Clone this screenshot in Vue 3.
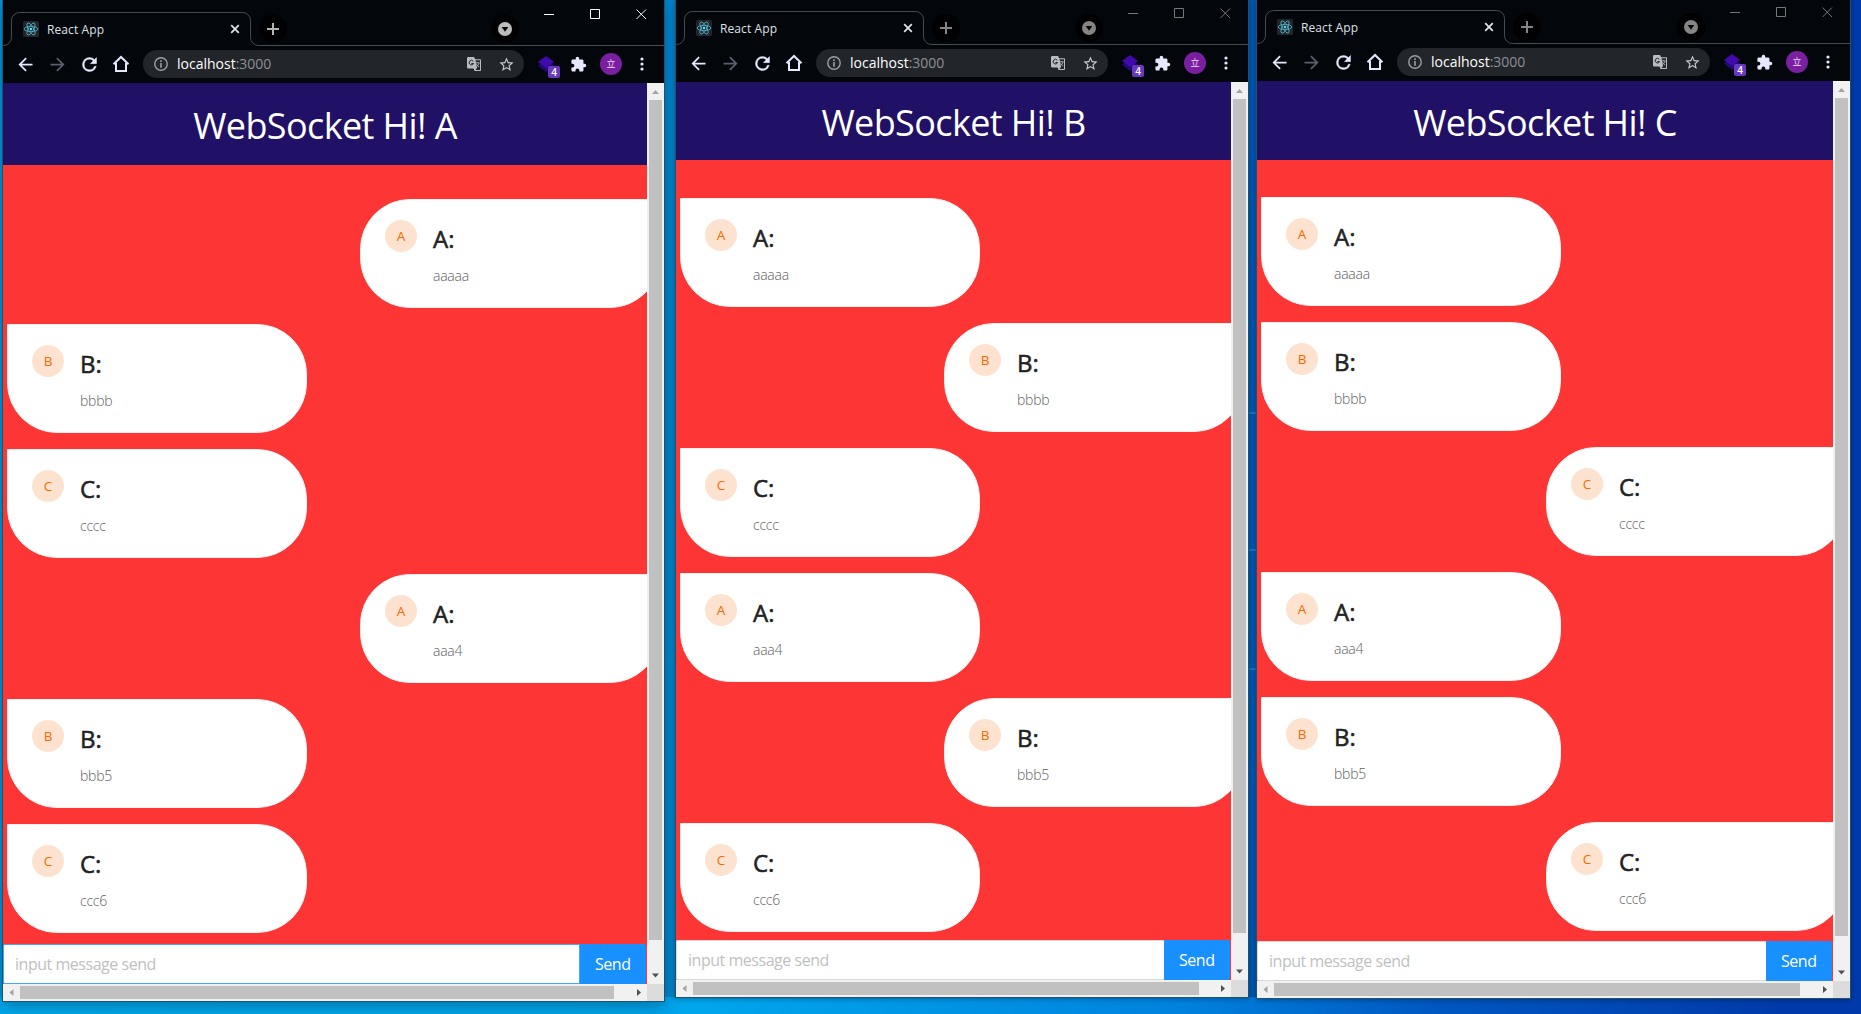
<script setup>
const thread = [
  { from: 'A', text: 'aaaaa' },
  { from: 'B', text: 'bbbb' },
  { from: 'C', text: 'cccc' },
  { from: 'A', text: 'aaa4' },
  { from: 'B', text: 'bbb5' },
  { from: 'C', text: 'ccc6' },
]

const windows = [
  { user: 'A', active: true, left: 2, top: 0, width: 663, height: 1002, header: 82, gap: 34, vThumb: 840, hThumb: 594 },
  { user: 'B', active: false, left: 675, top: -1, width: 574, height: 999, header: 78, gap: 38, vThumb: 834, hThumb: 506 },
  { user: 'C', active: false, left: 1256, top: -2, width: 595, height: 1001, header: 79, gap: 37, vThumb: 838, hThumb: 526 },
]

const px = (n) => `${n}px`
</script>

<template>
  <main class="desktop">
    <i class="beam b1"></i><i class="beam b2"></i><i class="beam b3"></i>
    <section
      v-for="w in windows"
      :key="w.user"
      class="window"
      :class="{ active: w.active }"
      :style="{ left: px(w.left), top: px(w.top), width: px(w.width), height: px(w.height) }"
    >
      <div class="titlebar">
        <div class="tab">
          <svg class="tab-shape" width="258" height="46" viewBox="0 0 258 46">
            <path d="M0 45.5h.5a8 8 0 0 0 8-8v-17a8 8 0 0 1 8-8h223a8 8 0 0 1 8 8v17a8 8 0 0 0 8 8h3" />
          </svg>
          <svg class="favicon" width="16" height="16" viewBox="0 0 16 16">
            <rect width="16" height="16" rx="1.5" fill="#22252a" />
            <g fill="none" stroke="#4fb4ca" stroke-width=".85">
              <ellipse cx="8" cy="8" rx="6.8" ry="2.6" />
              <ellipse cx="8" cy="8" rx="6.8" ry="2.6" transform="rotate(60 8 8)" />
              <ellipse cx="8" cy="8" rx="6.8" ry="2.6" transform="rotate(120 8 8)" />
            </g>
            <circle cx="8" cy="8" r="1.3" fill="#61dafb" />
          </svg>
          <span class="tab-title">React App</span>
          <svg class="tab-close" width="10" height="10" viewBox="0 0 10 10"><path d="M1.2 1.2l7.6 7.6M8.8 1.2L1.2 8.8" /></svg>
        </div>
        <div class="strip">
          <span class="round plus"><svg width="12" height="12" viewBox="0 0 12 12"><path d="M6 0v12M0 6h12" /></svg></span>
          <span class="spacer"></span>
          <span class="round search">
            <svg width="14" height="14" viewBox="0 0 14 14"><circle cx="7" cy="7" r="7" /><path d="M3.7 5h6.6L7 9.7z" fill="#020306" /></svg>
          </span>
          <svg class="controls" width="138" height="30" viewBox="0 0 138 30">
            <path d="M18 14.5h10M64.500 9.500h9v9h-9zM110.500 9.500l9.500 9.500M120 9.500l-9.500 9.500" />
          </svg>
        </div>
      </div>

      <div class="toolbar">
        <svg class="nav" viewBox="0 0 24 24"><path d="M20 11H7.830l5.590-5.590L12 4l-8 8 8 8 1.410-1.410L7.830 13H20z" /></svg>
        <svg class="nav dim" viewBox="0 0 24 24"><path d="M12 4l-1.410 1.410L16.170 11H4v2h12.170l-5.580 5.590L12 20l8-8z" /></svg>
        <svg class="nav" viewBox="0 0 24 24"><path stroke="#e6e8fb" stroke-width=".5" d="M17.650 6.350A7.960 7.960 0 0 0 12 4a8 8 0 1 0 7.730 10h-2.080A6 6 0 1 1 12 6c1.660 0 3.140.69 4.220 1.780L13 11h7V4z" /></svg>
        <svg class="nav home" viewBox="0 0 18 18"><path d="M1.500 9.300L9 2l7.500 7.300M4 8v8h10V8" /></svg>
        <div class="address">
          <svg width="14" height="14" viewBox="0 0 14 14"><circle cx="7" cy="7" r="6.200" fill="none" stroke="#9aa0a6" stroke-width="1.400" /><path d="M6.200 3.300h1.600v1.600H6.200zM6.200 6h1.600v4.700H6.200z" fill="#9aa0a6" /></svg>
          <span class="url">localhost<em>:3000</em></span>
          <svg class="translate" width="14" height="14" viewBox="0 0 14 14">
            <path d="M1.200 0H7l1.200 2.200h4.900a.9.900 0 0 1 .9.900v10a.9.900 0 0 1-.9.900H7.500L6.600 11.500H1.200A1.200 1.200 0 0 1 0 10.300V1.200A1.200 1.200 0 0 1 1.200 0z" fill="#b9bcc0" />
            <path d="M8.600 3.200h4.400V13H8.400l1.600-2z" fill="#24272b" />
            <path d="M6.300 4.300a2.300 2.300 0 1 0 .3 2.200H4.400" fill="none" stroke="#24272b" />
            <path d="M8.800 5.800h3.900M10.800 5v.8M12 6c-.3 1.700-1.400 3-2.600 3.800M9.500 7.200c.5 1.300 1.400 2.200 2.600 2.900" fill="none" stroke="#b9bcc0" stroke-width=".8" />
          </svg>
          <svg class="star" width="17" height="17" viewBox="0 0 24 24"><path d="M22 9.240l-7.190-.62L12 2 9.190 8.630 2 9.240l5.460 4.730L5.820 21 12 17.270 18.180 21l-1.630-7.030zM12 15.400l-3.760 2.270 1-4.280-3.320-2.880 4.380-.38L12 6.100l1.710 4.040 4.380.38-3.320 2.880 1 4.280z" /></svg>
        </div>
        <span class="ext">
          <svg width="16" height="16" viewBox="0 0 16 16"><path d="M0 9.500l8-5.500 8 5.500-8 6.500z" fill="#200a78" /><path d="M0 6l8-6 8 6-8 6z" fill="#4209ac" /></svg>
          <b>4</b>
        </span>
        <svg class="puzzle" width="17" height="17" viewBox="0 0 24 24"><path d="M20.500 11H19V7c0-1.100-.9-2-2-2h-4V3.500a2.500 2.500 0 0 0-5 0V5H4c-1.100 0-1.990.9-1.990 2v3.800H3.500a2.700 2.700 0 0 1 0 5.400H2V20c0 1.100.9 2 2 2h3.800v-1.500a2.700 2.700 0 0 1 5.400 0V22H17c1.100 0 2-.9 2-2v-4h1.500a2.500 2.500 0 0 0 0-5z" /></svg>
        <span class="profile">立</span>
        <svg class="dots" width="4" height="14" viewBox="0 0 4 14"><circle cx="2" cy="2" r="1.600" /><circle cx="2" cy="7" r="1.600" /><circle cx="2" cy="12" r="1.600" /></svg>
      </div>

      <div class="viewport">
        <div class="page">
          <h1 :style="{ height: px(w.header) }">WebSocket Hi! {{ w.user }}</h1>
          <div class="messages" :style="{ paddingTop: px(w.gap) }">
            <article v-for="m in thread" :key="m.text" class="card" :class="{ own: m.from === w.user }">
              <span class="avatar">{{ m.from }}</span>
              <div class="body">
                <h4>{{ m.from }}:</h4>
                <p>{{ m.text }}</p>
              </div>
            </article>
          </div>
          <div class="composer">
            <div class="input">input message send</div>
            <div class="send">Send</div>
          </div>
        </div>
        <div class="vbar">
          <svg width="17" height="17"><path d="M5 11l3.500-4 3.500 4z" fill="#a3a3a3" /></svg>
          <i :style="{ height: px(w.vThumb) }"></i>
          <svg class="end" width="17" height="17"><path d="M5 6.500h7L8.500 10.500z" fill="#505050" /></svg>
        </div>
      </div>
      <div class="hbar">
        <svg width="17" height="17"><path d="M10.500 5v7l-4-3.500z" fill="#a3a3a3" /></svg>
        <i :style="{ width: px(w.hThumb) }"></i>
        <svg class="end" width="17" height="17"><path d="M7 5v7l4-3.500z" fill="#505050" /></svg>
        <span class="corner"></span>
      </div>
    </section>
  </main>
</template>

<style>
body {
  margin: 0;
  overflow: hidden;
}
</style>

<style scoped>
* {
  box-sizing: border-box;
}
svg {
  display: block;
  flex: none;
}
.desktop {
  position: relative;
  width: 1861px;
  height: 1014px;
  overflow: hidden;
  font-family: 'Open Sans', 'Noto Sans', 'Noto Sans CJK TC', sans-serif;
  background:
    linear-gradient(to right, #00abee, #00a6ec 700px, #0082de 1180px, #0058c2 1430px, #003aaa 1780px) 0 100% / 100% 17px no-repeat,
    linear-gradient(to right, #0098dc 0, #0086d0 670px, #0058b4 1250px, #0040b0 1600px, #0039ab 1861px);
}
.beam {
  position: absolute;
  left: 1249px;
  width: 7px;
  height: 2px;
  background: #1474c8;
}
.b1 { top: 412px; }
.b2 { top: 549px; }
.b3 { top: 668px; }

.window {
  position: absolute;
  display: flex;
  flex-direction: column;
  border: 1px solid #235267;
  border-top: 0;
  background: #03070c;
  box-shadow: 0 1px 5px rgba(0, 10, 30, 0.35);
}
.window.active {
  box-shadow: 0 4px 16px rgba(0, 20, 40, 0.36);
}
.titlebar {
  display: flex;
  flex: none;
  height: 46px;
}
.tab {
  position: relative;
  display: flex;
  width: 258px;
  flex: none;
  height: 46px;
  padding: 12px 18px 0 20px;
  align-items: center;
}
.tab-shape {
  position: absolute;
  left: 0;
  top: 0;
  fill: none;
  stroke: #484b50;
}
.tab-title {
  margin-left: 8px;
  flex: 1;
  font-size: 12px;
  line-height: 16px;
  padding-top: 1px;
  letter-spacing: 0.1px;
  color: #dfe1e5;
}
.tab-close {
  margin-right: 3px;
  stroke: #dfe1e5;
  stroke-width: 1.8;
}
.strip {
  display: flex;
  flex: 1;
  border-bottom: 1px solid #484b50;
}
.round {
  width: 28px;
  height: 28px;
  margin-top: 15px;
  border-radius: 50%;
  background: #010103;
  display: flex;
  align-items: center;
  justify-content: center;
}
.plus {
  margin-left: -2px;
  stroke: #858585;
  stroke-width: 2;
}
.search {
  fill: #858585;
  margin-right: 7px;
}
.active .plus {
  stroke: #b4b4b4;
}
.active .search {
  fill: #bcbcbc;
}
.spacer {
  flex: 1;
}
.controls {
  fill: none;
  stroke: #777;
  stroke-width: 1;
}
.active .controls {
  stroke: #fff;
}

.toolbar {
  display: flex;
  flex: none;
  align-items: center;
  height: 37px;
  padding: 0 20px 1px 12px;
}
.nav {
  width: 21px;
  height: 21px;
  margin-right: 11px;
  fill: #e6e8fb;
}
.nav.dim {
  fill: #5c5e6b;
}
.nav.home {
  width: 18px;
  height: 18px;
  margin: 0 13px 0 1px;
  fill: none;
  stroke: #e6e8fb;
  stroke-width: 2;
}
.address {
  display: flex;
  flex: 1;
  align-items: center;
  height: 28px;
  border-radius: 14px;
  background: #222529;
  padding: 0 9px 0 11px;
}
.url {
  flex: 1;
  margin-left: 9px;
  font-size: 14px;
  line-height: 20px;
  color: #fff;
}
.url em {
  font-style: normal;
  color: #8c9095;
}
.star {
  margin-left: 17px;
  fill: #c6c8cc;
}
.ext {
  position: relative;
  width: 16px;
  height: 16px;
  margin: 0 15px 0 14px;
}
.ext b {
  position: absolute;
  left: 10px;
  top: 10px;
  width: 12px;
  height: 12px;
  border-radius: 2px;
  background: #6a38bf;
  color: #fff;
  font: 600 10px/12px 'Open Sans', sans-serif;
  text-align: center;
}
.puzzle {
  margin-left: 1px;
  fill: #e6e8fb;
}
.profile {
  width: 22px;
  height: 22px;
  margin: 0 18px 0 13px;
  border-radius: 50%;
  background: #7b1fa2;
  color: #f0dcf6;
  font: 9px/22px 'Noto Sans CJK TC', sans-serif;
  text-align: center;
}
.dots {
  fill: #e6e8fb;
}

.viewport {
  display: flex;
  flex: 1;
  min-height: 0;
}
.page {
  display: flex;
  flex: 1;
  min-width: 0;
  flex-direction: column;
  overflow: hidden;
  background: #fd3635;
}
h1 {
  display: flex;
  flex: none;
  align-items: center;
  justify-content: center;
  margin: 0;
  padding-top: 4px;
  background: #201066;
  color: #fff;
  font-size: 36px;
  font-weight: 400;
  letter-spacing: -0.6px;
  white-space: pre;
  line-height: 50px;
}
.messages {
  flex: 1;
  min-height: 0;
}
.card {
  display: flex;
  width: 300px;
  height: 109px;
  margin: 0 0 16px 4px;
  padding: 20px 24px;
  border: 1px solid #f0f0f0;
  border-radius: 0 50px 50px 50px;
  background: #fff;
}
.card.own {
  margin-left: calc(100% - 287px);
  border-radius: 50px 0 50px 50px;
}
.avatar {
  width: 32px;
  height: 32px;
  flex: none;
  border-radius: 50%;
  background: #fde3cf;
  color: #f56a00;
  font-size: 13.5px;
  font-weight: 400;
  line-height: 32px;
  text-align: center;
}
.body {
  margin-left: 16px;
}
h4 {
  margin: 3px 0 0;
  font-size: 24px;
  font-weight: 400;
  line-height: 32px;
  letter-spacing: 0;
  color: #222;
  -webkit-text-stroke: 0.55px #222;
}
p {
  margin: 10px 0 0;
  font-size: 14px;
  font-weight: 300;
  line-height: 22px;
  letter-spacing: -0.25px;
  color: #606060;
}
.composer {
  display: flex;
  flex: none;
  height: 40px;
  padding-right: 1px;
}
.input {
  flex: 1;
  padding-left: 11px;
  border: 1px solid #d9d9d9;
  border-right: 0;
  border-radius: 2px 0 0 2px;
  background: #fff;
  color: #bfbfbf;
  font-size: 16px;
  line-height: 39px;
  letter-spacing: -0.47px;
}
.active .input {
  border: 1px solid #40a9ff;
}
.send {
  width: 66.5px;
  border-radius: 0 2px 2px 0;
  background: #1890ff;
  color: #fff;
  font-size: 16px;
  line-height: 41px;
  letter-spacing: -0.5px;
  text-align: center;
}
.vbar {
  display: flex;
  flex-direction: column;
  align-items: center;
  width: 17px;
  background: #f1f1f1;
}
.vbar i {
  width: 13px;
  background: #c1c1c1;
}
.hbar {
  display: flex;
  flex: none;
  align-items: center;
  height: 17px;
  background: #f1f1f1;
}
.hbar i {
  height: 13px;
  background: #c1c1c1;
}
.vbar .end {
  margin-top: auto;
}
.hbar .end {
  margin-left: auto;
}
.corner {
  width: 17px;
  height: 17px;
  background: #dcdcdc;
}
</style>
